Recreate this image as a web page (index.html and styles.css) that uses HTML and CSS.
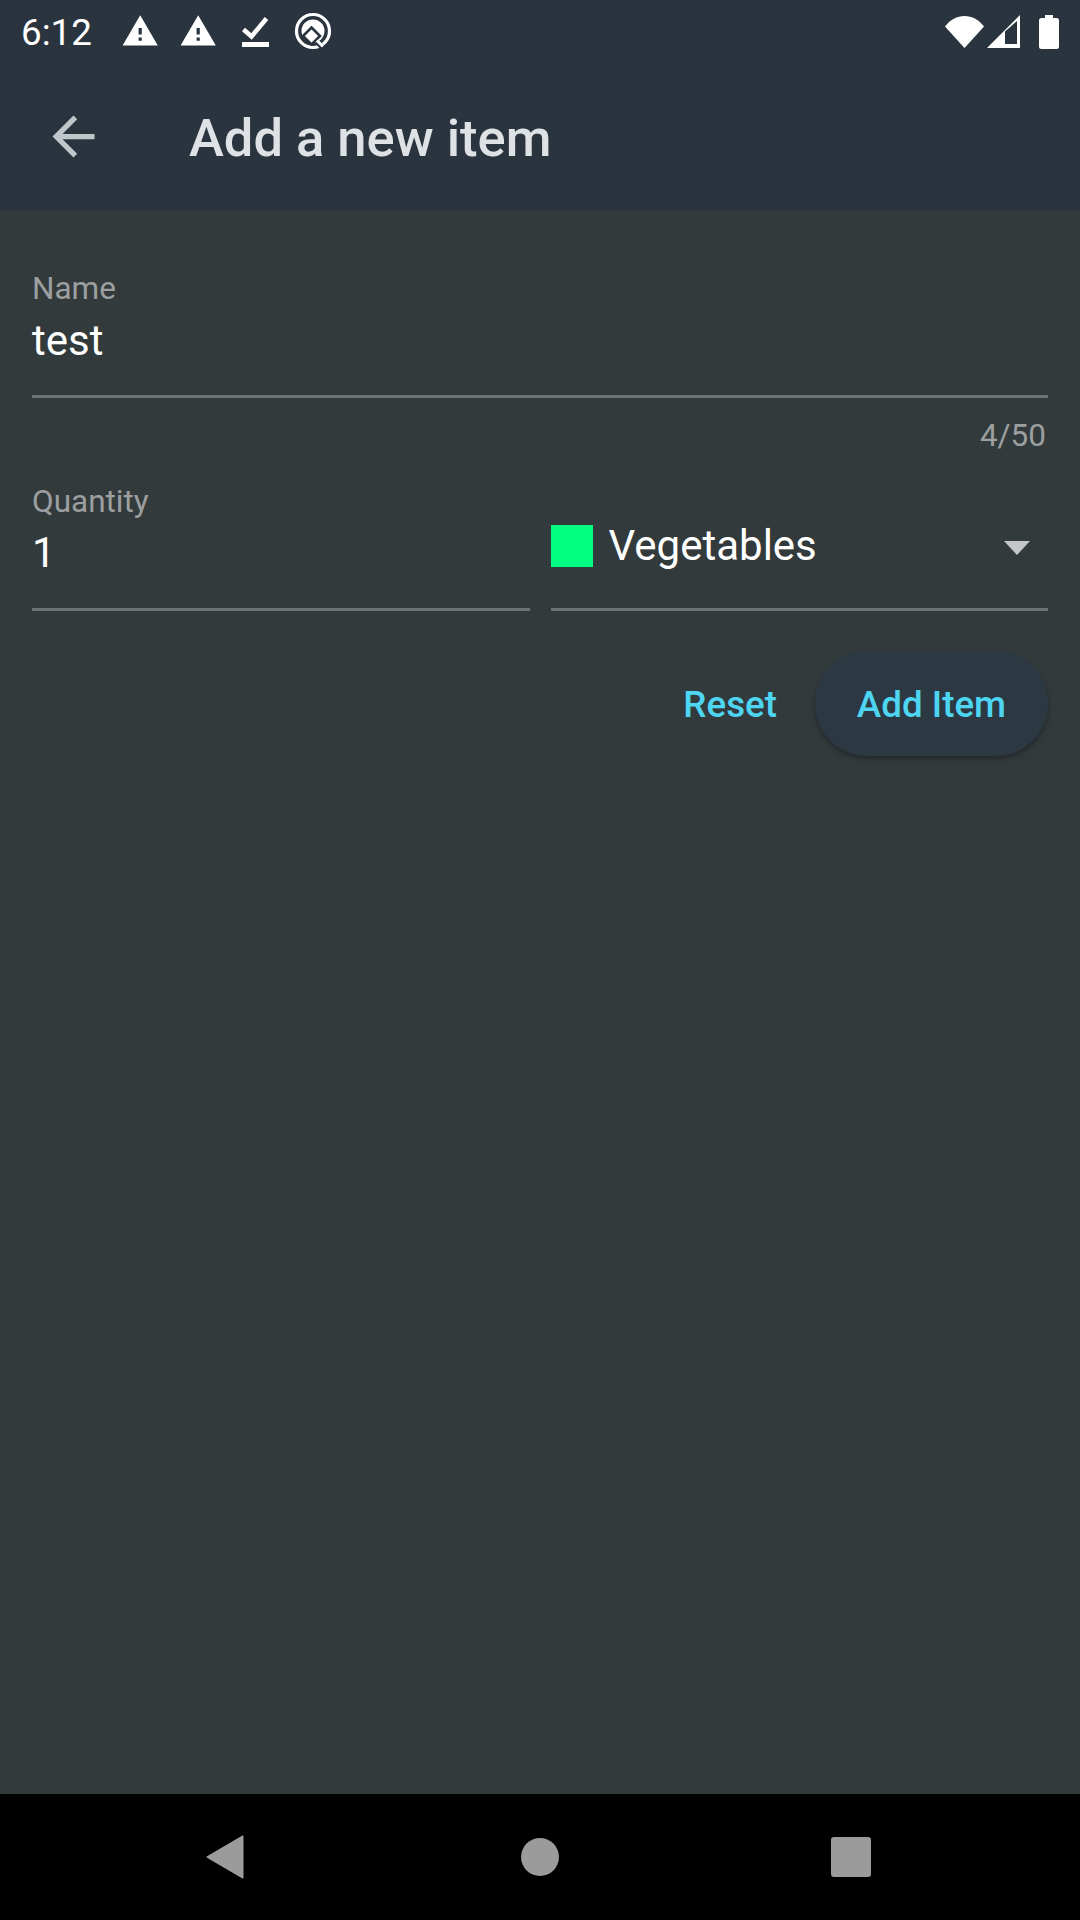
FILE: index.html
```html
<!DOCTYPE html>
<html lang="en">
<head>
<meta charset="utf-8">
<title>Add a new item</title>
<link rel="stylesheet" href="styles.css">
</head>
<body>
<div class="screen">
  <header class="top">
    <div class="status">
      <span class="time">6:12</span>
      <div class="notifs">
        <svg class="ic-warn" viewBox="0 0 24 24"><path fill="#fff" fill-rule="evenodd" d="M1 21h22L12 2 1 21zm12-3h-2v-2h2v2zm0-4h-2v-4h2v4z"/></svg>
        <svg class="ic-warn" viewBox="0 0 24 24"><path fill="#fff" fill-rule="evenodd" d="M1 21h22L12 2 1 21zm12-3h-2v-2h2v2zm0-4h-2v-4h2v4z"/></svg>
        <svg class="ic-check" viewBox="0 0 27 31"><path fill="none" stroke="#fff" stroke-width="4.6" d="M1.500 13.500l8 7L24.500 2.500"/><rect x="0" y="26" width="27" height="5" fill="#fff"/></svg>
        <svg class="ic-q" viewBox="0 0 38 38"><circle cx="19" cy="19" r="16.500" fill="none" stroke="#fff" stroke-width="3.200"/><circle cx="19" cy="19" r="11.500" fill="#fff"/><path fill="#fff" stroke="#2a343e" stroke-width="2.600" d="M17.500 15.500l8.500 8.500-8.500 8.500-8.500-8.500z"/><path fill="none" stroke="#2a343e" stroke-width="5" d="M24 31l8 8"/><path fill="none" stroke="#fff" stroke-width="3" d="M23 28.500l6 6"/></svg>
      </div>
      <div class="sys">
        <svg class="ic-wifi" viewBox="0 0 39 32"><path fill="#fff" d="M0 10.500C5 4 12 0 19.500 0S34 4 39 10.500L19.500 32z"/></svg>
        <svg class="ic-signal" viewBox="0 0 33 33"><path fill="#fff" fill-rule="evenodd" d="M0 33L33 0v33zM18 16.500V29h12V6z"/></svg>
        <svg class="ic-batt" viewBox="0 0 20 34"><path fill="#fff" d="M6 0h8v3h3.500A2.500 2.500 0 0 1 20 5.500v26a2.500 2.500 0 0 1-2.500 2.500h-15A2.500 2.500 0 0 1 0 31.500v-26A2.500 2.500 0 0 1 2.500 3H6z"/></svg>
      </div>
    </div>
    <div class="appbar">
      <svg class="back" viewBox="0 0 24 24"><path fill="#c0c7cb" d="M20 11H7.830l5.590-5.590L12 4l-8 8 8 8 1.410-1.410L7.830 13H20v-2z"/></svg>
      <h1 class="title">Add a new item</h1>
    </div>
  </header>

  <main class="content">
    <div class="field name-field">
      <div class="label">Name</div>
      <div class="value">test</div>
    </div>
    <div class="counter">4/50</div>
    <div class="row">
      <div class="field qty-field">
        <div class="label">Quantity</div>
        <div class="value">1</div>
      </div>
      <div class="field select">
        <span class="swatch"></span>
        <span class="select-text">Vegetables</span>
        <svg class="caret" viewBox="0 0 26 14"><path fill="#c4c6c7" d="M0 0h26L13 14z"/></svg>
      </div>
    </div>
    <div class="actions">
      <button class="btn">Reset</button>
      <button class="btn btn-filled">Add Item</button>
    </div>
  </main>

  <nav class="nav">
    <svg class="nav-back" viewBox="0 0 38 44"><path fill="#9b9b9b" stroke="#9b9b9b" stroke-width="2" stroke-linejoin="round" d="M36.500 1.500v41L1.500 22z"/></svg>
    <span class="nav-home"></span>
    <span class="nav-recent"></span>
  </nav>
</div>
</body>
</html>
```
FILE: styles.css
```css
* { box-sizing: border-box; }
html, body { margin: 0; padding: 0; }
body { font-family: Roboto, "Noto Sans", sans-serif; background: #333a3c; }
.screen { width: 1080px; height: 1920px; display: flex; flex-direction: column; overflow: hidden; }

.top { background: #2a343e; flex: none; }
.status { height: 63px; display: flex; align-items: center; padding: 2px 21px 0 21px; color: #fff; }
.time { font-size: 36.75px; line-height: 61px; width: 100px; }
.notifs { display: flex; align-items: center; margin-top: -2px; }
.ic-warn { width: 38.4px; height: 38.4px; margin-right: 19.6px; }
.ic-check { width: 27px; height: 31px; margin: 0 25px 0 5px; }
.ic-q { width: 38px; height: 38px; }
.sys { margin-left: auto; display: flex; align-items: center; margin-top: -2px; }
.ic-wifi { width: 39px; height: 32px; }
.ic-signal { width: 33px; height: 33px; margin-left: 3px; }
.ic-batt { width: 20px; height: 34px; margin-left: 19px; }

.appbar { height: 147px; display: flex; align-items: center; padding-left: 42px; }
.back { width: 63px; height: 63px; flex: none; }
.title { margin: 2px 0 0 84px; font-size: 52.5px; font-weight: 500; color: #dfe2e4; }

.content { flex: 1; padding: 60px 32px 0 32px; }
.field { border-bottom: 3px solid #6e7375; }
.name-field { height: 128px; }
.label { font-size: 31.5px; line-height: 37px; color: #9b9fa0; }
.value { font-size: 42px; line-height: 49px; color: #fff; margin-top: 9px; }
.counter { text-align: right; font-size: 31.5px; line-height: 37px; color: #9b9fa0; margin: 19px 2px 0 0; }
.row { display: flex; gap: 21px; margin-top: 28px; }
.row .field { flex: 1; height: 129px; }
.qty-field { padding-top: 1px; }
.qty-field .value { margin-top: 8px; }
.select { display: flex; align-items: center; padding-top: 2px; }
.swatch { width: 42px; height: 42px; background: #00ff80; flex: none; }
.select-text { font-size: 42px; color: #fff; margin: -2px 0 0 16px; }
.caret { width: 26px; height: 14px; margin: 3px 18px 0 auto; }

.actions { display: flex; justify-content: flex-end; align-items: center; gap: 20px; margin-top: 40px; }
.btn { font-family: inherit; font-size: 36.75px; font-weight: 500; color: #4dd5f2; background: none; border: 0; height: 105px; padding: 2px 18px 0; white-space: nowrap; }
.btn-filled { background: #2c3943; border-radius: 52px; padding: 2px 0 0; width: 233px; box-shadow: 0 3px 5px rgba(0,0,0,.3); }

.nav { flex: none; height: 126px; background: #000; position: relative; }
.nav-back { position: absolute; left: 206px; top: 41px; width: 38px; height: 44px; }
.nav-home { position: absolute; left: 521px; top: 44px; width: 38px; height: 38px; border-radius: 50%; background: #9b9b9b; }
.nav-recent { position: absolute; left: 831px; top: 43px; width: 40px; height: 40px; border-radius: 3px; background: #9b9b9b; }
```
